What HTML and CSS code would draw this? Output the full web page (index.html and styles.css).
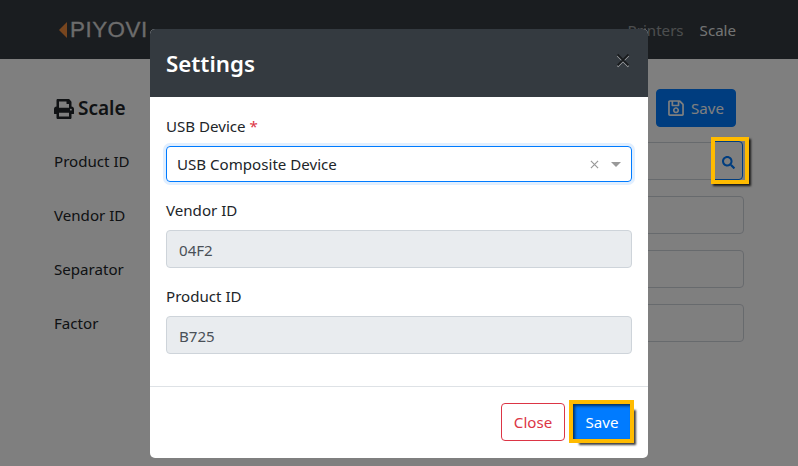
FILE: index.html
```html
<!DOCTYPE html>
<html lang="en">
<head>
<meta charset="utf-8">
<title>Scale</title>
<link rel="stylesheet" href="styles.css">
</head>
<body>
<nav class="navbar">
  <a class="brand"><svg class="brand-mark" viewBox="0 0 8 16" width="8" height="16"><polygon points="8,0 8,16 0,8"/></svg><span>PIYOVI</span></a>
  <div class="nav-links"><a class="nav-link">Printers</a><a class="nav-link active">Scale</a></div>
</nav>
<main class="page">
  <div class="page-head">
    <h1 class="page-title"><svg viewBox="0 0 512 512" width="20" height="20" class="ico"><path fill="currentColor" d="M448 192V77.25c0-8.49-3.37-16.62-9.37-22.63L393.37 9.37c-6-6-14.14-9.37-22.63-9.37H96C78.33 0 64 14.33 64 32v160c-35.35 0-64 28.65-64 64v112c0 8.84 7.16 16 16 16h48v96c0 17.67 14.33 32 32 32h320c17.67 0 32-14.33 32-32v-96h48c8.84 0 16-7.16 16-16V256c0-35.35-28.65-64-64-64zm-64 256H128v-96h256v96zm0-224H128V64h192v48c0 8.84 7.16 16 16 16h48v96zm48 72c-13.25 0-24-10.75-24-24 0-13.26 10.75-24 24-24s24 10.74 24 24c0 13.25-10.75 24-24 24z"/></svg>Scale</h1>
    <button class="btn-bg-save"><svg viewBox="0 0 448 512" width="16" height="18" class="ico"><path fill="currentColor" d="M433.9 129.9l-83.9-83.9A48 48 0 0 0 316.1 32H48C21.5 32 0 53.5 0 80v352c0 26.5 21.5 48 48 48h352c26.5 0 48-21.5 48-48V163.9a48 48 0 0 0-14.1-34zM272 80v80H144V80h128zm122 352H54a6 6 0 0 1-6-6V86a6 6 0 0 1 6-6h42v104c0 13.3 10.7 24 24 24h176c13.3 0 24-10.7 24-24V83.9l78.2 78.2a6 6 0 0 1 1.8 4.2V426a6 6 0 0 1-6 6zM224 232c-48.5 0-88 39.5-88 88s39.5 88 88 88 88-39.5 88-88-39.5-88-88-88zm0 128c-22.1 0-40-17.9-40-40s17.9-40 40-40 40 17.9 40 40-17.9 40-40 40z"/></svg>Save</button>
  </div>
  <div class="form-row first"><label class="row-label">Product ID</label><div class="row-input with-btn"><div class="row-field"></div><button class="search-btn"><svg viewBox="0 0 512 512" width="13" height="13"><path fill="currentColor" d="M505 442.7L405.3 343c-4.5-4.5-10.6-7-17-7H372c27.6-35.3 44-79.7 44-128C416 93.1 322.9 0 208 0S0 93.1 0 208s93.1 208 208 208c48.3 0 92.7-16.4 128-44v16.3c0 6.4 2.5 12.5 7 17l99.7 99.7c9.4 9.4 24.6 9.4 33.9 0l28.3-28.3c9.4-9.4 9.4-24.6.1-34zM208 336c-70.7 0-128-57.2-128-128 0-70.7 57.2-128 128-128 70.7 0 128 57.2 128 128 0 70.7-57.2 128-128 128z"/></svg></button></div></div>
  <div class="form-row"><label class="row-label">Vendor ID</label><div class="row-input"></div></div>
  <div class="form-row"><label class="row-label">Separator</label><div class="row-input"></div></div>
  <div class="form-row"><label class="row-label">Factor</label><div class="row-input"></div></div>
</main>
<div class="backdrop"></div>
<div class="search-highlight"></div>
<section class="modal">
  <header class="modal-header">
    <h2 class="modal-title">Settings</h2>
    <svg class="modal-x" viewBox="0 0 14 14" width="14" height="14"><path d="M1.5 1.5L12.5 12.5M12.5 1.5L1.5 12.5" stroke="currentColor" stroke-width="1.8" fill="none"/></svg>
  </header>
  <div class="modal-body">
    <div class="group">
      <label class="label">USB Device <span class="req">*</span></label>
      <div class="select">
        <span class="select-value">USB Composite Device</span>
        <svg class="select-clear" viewBox="0 0 10 10" width="9" height="9"><path d="M1 1L9 9M9 1L1 9" stroke="currentColor" stroke-width="1.3" fill="none"/></svg>
        <span class="select-arrow"></span>
      </div>
    </div>
    <div class="group">
      <label class="label">Vendor ID</label>
      <div class="input-ro">04F2</div>
    </div>
    <div class="group">
      <label class="label">Product ID</label>
      <div class="input-ro">B725</div>
    </div>
  </div>
  <footer class="modal-footer">
    <button class="btn-close">Close</button>
    <button class="btn-save">Save</button>
  </footer>
</section>
</body>
</html>
```
FILE: styles.css
```css
* { box-sizing: border-box; }
html, body { margin: 0; height: 466px; overflow: hidden; }
body { background: #fff; color: #212529; font: 15.1px/24px "Noto Sans", sans-serif; position: relative; }
button { font: inherit; }

.navbar { height: 59px; background: #343a40; display: flex; align-items: center; justify-content: space-between; padding: 0 62px 0 59px; }
.brand { display: flex; align-items: center; gap: 3px; color: #d8d8d8; font: 22.4px/28px "Liberation Sans", sans-serif; letter-spacing: .5px; -webkit-text-stroke: .3px #d8d8d8; }
.brand-mark { fill: #ef8a3c; }
.nav-links { display: flex; gap: 16px; }
.nav-link { color: rgba(255,255,255,.5); }
.nav-link.active { color: rgba(255,255,255,.9); }

.page { padding: 30px 54px 0; }
.page-head { display: flex; justify-content: space-between; align-items: center; height: 37px; padding-right: 8px; }
.page-title { display: flex; align-items: center; gap: 4px; margin: 0; padding-top: 2px; font-size: 19px; font-weight: 600; line-height: 37px; }
.ico { display: block; }
.btn-bg-save { display: flex; align-items: center; gap: 7px; width: 80px; height: 38px; padding: 0 11px; background: #007bff; border: 1px solid #007bff; border-radius: 4px; color: #fff; }
.form-row { display: flex; align-items: center; height: 38px; margin-top: 16px; }
.form-row.first { margin-top: 16px; }
.row-label { width: 100px; flex: none; }
.row-input { flex: 1; height: 38px; border: 1px solid #ced4da; border-radius: 4px; background: #fff; }
.row-input.with-btn { display: flex; border: 0; }
.row-field { flex: 1; border: 1px solid #ced4da; border-right: 0; border-radius: 4px 0 0 4px; }
.search-btn { display: flex; align-items: center; justify-content: center; width: 30px; height: 39px; margin-top: -1px; margin-right: 1px; padding: 3px 0 0; background: #fff; border: 1px solid #007bff; border-radius: 0 4px 4px 0; color: #007bff; }

.backdrop { position: absolute; inset: 0; background: rgba(0,0,0,.5); }
.search-highlight { position: absolute; left: 711px; top: 137px; width: 38px; height: 47px; border: 4px solid #ffbb00; box-shadow: 2px 2px 2px rgba(0,0,0,.8); }
.modal { position: absolute; left: 150px; top: 29px; width: 498px; height: 429px; display: flex; flex-direction: column; background: #fff; border-radius: 5px; overflow: hidden; }
.modal-header { height: 68px; flex: none; display: flex; align-items: center; justify-content: space-between; padding: 1px 18px 0 16px; background: #343a40; color: #fff; }
.modal-title { margin: 0; font-size: 22.3px; font-weight: 600; line-height: 36px; }
.modal-x { color: #000; opacity: .55; margin-top: -8px; filter: drop-shadow(0 1px 0 #fff); }
.modal-body { flex: 1; padding: 17px 16px 0; }
.group { margin-bottom: 16px; }
.label { display: block; line-height: 24px; margin-bottom: 8px; color: #212529; }
.req { color: #dc3545; }
.select { display: flex; align-items: center; height: 36px; padding: 0 10px; border: 1px solid #007bff; border-radius: 4px; box-shadow: 0 0 0 3px #e1efff; }
.select-value { flex: 1; }
.select-clear { color: #999; margin-right: 12px; }
.select-arrow { width: 0; height: 0; border: 5px solid transparent; border-top: 5px solid #999; border-bottom: 0; }
.input-ro { height: 38px; padding: 0 12px; line-height: 38px; background: #e9ecef; border: 1px solid #ced4da; border-radius: 4px; color: #495057; }
.modal-footer { height: 72px; flex: none; display: flex; align-items: center; justify-content: flex-end; gap: 8px; padding: 0 18px 2px 16px; border-top: 1px solid #dee2e6; }
.btn-close { width: 64px; height: 38px; padding: 0; background: #fff; border: 1px solid #dc3545; border-radius: 4px; color: #dc3545; }
.btn-save { width: 57px; height: 35px; padding: 0 0 0 1px; background: #007bff; border: 0; color: #fff; outline: 4px solid #ffbb00; box-shadow: 6px 6px 2px rgba(0,0,0,.75), inset 2px 2px 3px rgba(0,0,0,.6); }
```
